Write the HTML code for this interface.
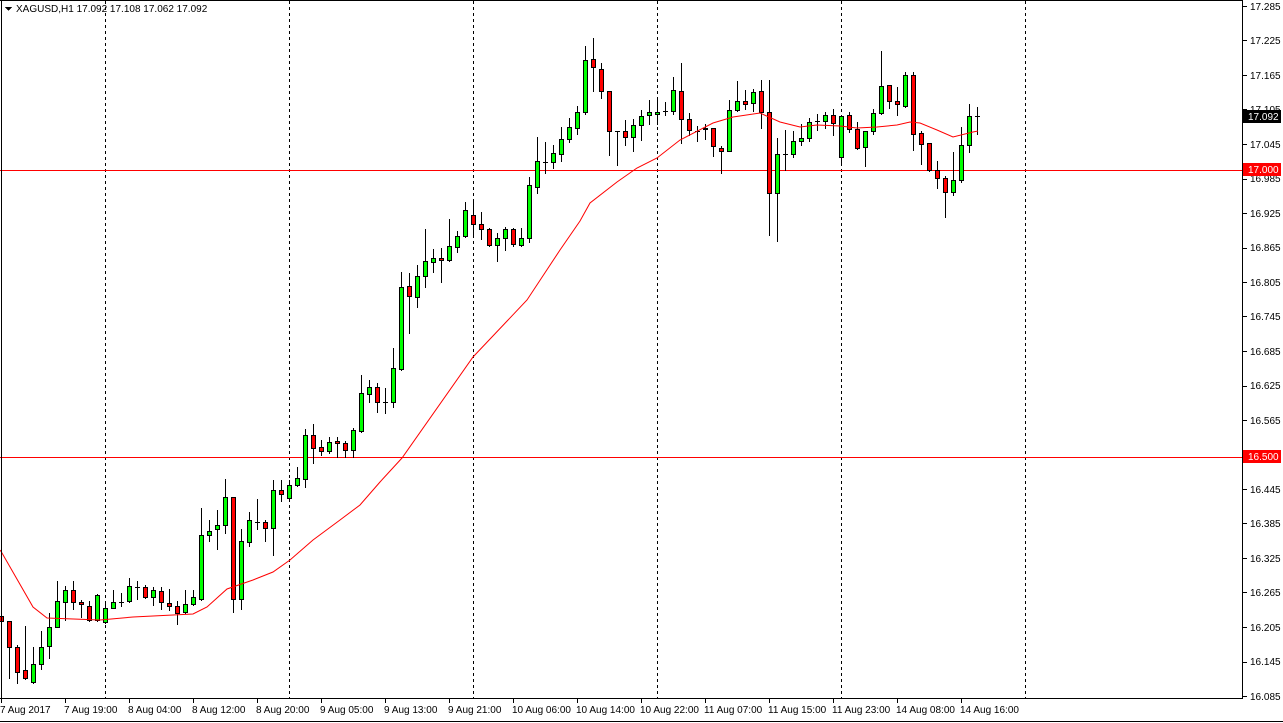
<!DOCTYPE html>
<html><head><meta charset="utf-8"><style>
html,body{margin:0;padding:0;background:#fff;width:1283px;height:723px;overflow:hidden}
svg{display:block}
text{font-family:"Liberation Sans",sans-serif;font-size:10px;fill:#000}
</style></head><body>
<svg id="c" width="1283" height="723" viewBox="0 0 1283 723" shape-rendering="crispEdges">
<rect x="0" y="0" width="1283" height="723" fill="#fff"/>
<g id="grid" stroke="#000" stroke-dasharray="3,3">
<line x1="105.5" y1="1" x2="105.5" y2="698"/>
<line x1="289.5" y1="1" x2="289.5" y2="698"/>
<line x1="473.5" y1="1" x2="473.5" y2="698"/>
<line x1="657.5" y1="1" x2="657.5" y2="698"/>
<line x1="841.5" y1="1" x2="841.5" y2="698"/>
<line x1="1025.5" y1="1" x2="1025.5" y2="698"/>
</g>
<line x1="0" y1="170.5" x2="1242" y2="170.5" stroke="#f00"/>
<line x1="0" y1="457.5" x2="1242" y2="457.5" stroke="#f00"/>
<g id="cd"></g>
<polyline id="ma" fill="none" stroke="#f00" stroke-width="1" shape-rendering="auto" points="0,550 2,553 33,607 47,618 100,620 133,617 193,614 207,607 227,589 253,580 273,572 290,560 313,540 340,520 360,505 380,482 402,458 473,357 527,300 560,250 580,221 590,203 617,182 637,168 657,158 680,140 713,123 733,117 760,113 780,122 800,127 817,125 840,126 857,128 877,127 897,125 910,122 920,123 937,130 953,137 973,132 978,131"/>
<!-- frame -->
<line x1="1.5" y1="0" x2="1.5" y2="699" stroke="#000"/>
<line x1="0" y1="0.5" x2="1243" y2="0.5" stroke="#000"/>
<line x1="1242.5" y1="0" x2="1242.5" y2="699" stroke="#000"/>
<line x1="0" y1="698.5" x2="1243" y2="698.5" stroke="#000"/>
<line x1="0" y1="721.5" x2="1283" y2="721.5" stroke="#000"/>
<g id="ax"></g>
<!-- header -->
<polygon points="5,7 12,7 8.5,11" fill="#000"/>
<text x="16" y="12" style="fill:#000">XAGUSD,H1  17.092 17.108 17.062 17.092</text>
<!-- price labels -->
<g id="pl">
<text x="1250" y="10">17.285</text>
<text x="1250" y="44">17.225</text>
<text x="1250" y="79">17.165</text>
<text x="1250" y="113">17.105</text>
<text x="1250" y="148">17.045</text>
<text x="1250" y="182">16.985</text>
<text x="1250" y="217">16.925</text>
<text x="1250" y="251">16.865</text>
<text x="1250" y="286">16.805</text>
<text x="1250" y="320">16.745</text>
<text x="1250" y="355">16.685</text>
<text x="1250" y="389">16.625</text>
<text x="1250" y="424">16.565</text>
<text x="1250" y="493">16.445</text>
<text x="1250" y="527">16.385</text>
<text x="1250" y="562">16.325</text>
<text x="1250" y="596">16.265</text>
<text x="1250" y="631">16.205</text>
<text x="1250" y="665">16.145</text>
<text x="1250" y="700">16.085</text>
</g>
<rect x="1243" y="110" width="38" height="13" fill="#000"/>
<text x="1248" y="120" style="fill:#fff">17.092</text>
<rect x="1243" y="163" width="38" height="13" fill="#f00"/>
<text x="1248" y="173" style="fill:#fff">17.000</text>
<rect x="1243" y="450" width="38" height="13" fill="#f00"/>
<text x="1248" y="460" style="fill:#fff">16.500</text>
<!-- time labels -->
<g>
<text x="0" y="713">7 Aug 2017</text>
<text x="64" y="713">7 Aug 19:00</text>
<text x="128" y="713">8 Aug 04:00</text>
<text x="192" y="713">8 Aug 12:00</text>
<text x="256" y="713">8 Aug 20:00</text>
<text x="320" y="713">9 Aug 05:00</text>
<text x="384" y="713">9 Aug 13:00</text>
<text x="448" y="713">9 Aug 21:00</text>
<text x="512" y="713">10 Aug 06:00</text>
<text x="576" y="713">10 Aug 14:00</text>
<text x="640" y="713">10 Aug 22:00</text>
<text x="704" y="713">11 Aug 07:00</text>
<text x="768" y="713">11 Aug 15:00</text>
<text x="832" y="713">11 Aug 23:00</text>
<text x="896" y="713">14 Aug 08:00</text>
<text x="960" y="713">14 Aug 16:00</text>
</g>
</svg>
<script>
var D=[[616,621,611,626],[621,647,621,678],[647,672,645,683],[670,678,626,679],[682,664,647,683],[664,647,631,669],[646,627,613,658],[627,601,581,627],[602,590,586,620],[590,602,581,609],[602,604,600,617],[606,620,601,621],[620,595,594,621],[622,608,601,623],[608,602,590,608],[602,602,593,606],[601,586,578,602],[587,587,581,599],[587,597,585,598],[597,590,587,605],[591,602,587,609],[603,606,589,610],[606,613,601,624],[612,604,590,613],[604,597,590,605],[599,535,508,600],[535,531,520,541],[529,525,510,549],[525,497,479,533],[497,599,497,612],[599,541,529,609],[542,520,512,546],[522,522,499,529],[522,528,520,541],[528,490,480,555],[490,494,480,501],[498,485,480,499],[485,478,467,486],[479,435,429,487],[435,448,424,463],[447,451,440,455],[451,442,437,453],[441,443,437,457],[443,450,441,457],[450,430,428,457],[431,393,375,432],[394,387,380,402],[387,402,383,412],[402,402,388,413],[402,368,348,407],[369,287,272,370],[286,296,273,333],[297,276,265,307],[276,261,229,287],[262,258,249,272],[258,260,248,282],[260,246,219,261],[247,236,231,252],[236,210,202,237],[215,224,199,236],[224,229,212,239],[229,245,228,246],[245,238,233,261],[238,229,227,250],[229,244,228,246],[245,238,228,246],[238,185,177,242],[187,161,137,193],[162,162,142,173],[162,153,145,168],[154,139,127,161],[139,127,118,142],[128,112,106,134],[112,60,46,114],[59,67,38,91],[69,91,63,98],[91,131,91,155],[131,131,131,165],[131,137,120,145],[137,125,119,151],[125,116,110,140],[115,112,100,124],[114,112,97,124],[111,111,102,115],[111,90,77,114],[91,119,63,143],[119,130,113,135],[131,131,126,141],[129,128,124,139],[128,146,128,156],[148,151,146,173],[151,110,100,151],[110,101,81,111],[101,104,90,109],[103,92,89,111],[91,112,80,128],[112,193,80,235],[193,154,138,241],[154,154,130,170],[154,141,131,157],[141,138,124,145],[138,122,118,141],[121,121,114,130],[121,115,112,128],[115,123,109,135],[157,116,116,163],[115,129,112,132],[129,148,122,149],[147,131,131,166],[131,113,109,134],[113,86,51,114],[85,101,85,108],[101,104,87,115],[106,75,72,107],[75,134,72,150],[133,144,131,164],[143,170,143,171],[170,178,161,188],[178,192,176,217],[192,180,152,195],[180,145,127,182],[145,116,104,152],[116,116,107,134]];
var s='',NS='';
for(var k=0;k<D.length;k++){
 var d=D[k],x=1+8*k,o=d[0],c=d[1],h=d[2],l=d[3];
 s+='<line x1="'+(x+.5)+'" y1="'+h+'" x2="'+(x+.5)+'" y2="'+(l+1)+'" stroke="#000"/>';
 if(o==c){s+='<line x1="'+(x-2)+'" y1="'+(o+.5)+'" x2="'+(x+3)+'" y2="'+(o+.5)+'" stroke="#000"/>';}
 else{var t=Math.min(o,c),b=Math.max(o,c);
 s+='<rect x="'+(x-1.5)+'" y="'+(t+.5)+'" width="4" height="'+(b-t)+'" fill="'+(c<o?'#00ff00':'#ff0000')+'" stroke="#000"/>';}
}
document.getElementById('cd').innerHTML=s;
var a='';
var pr=[17.285,17.225,17.165,17.105,17.045,16.985,16.925,16.865,16.805,16.745,16.685,16.625,16.565,16.505,16.445,16.385,16.325,16.265,16.205,16.145,16.085];
for(var i=0;i<pr.length;i++){var y=Math.round(6+(17.285-pr[i])*575)+.5;a+='<line x1="1243" y1="'+y+'" x2="1247" y2="'+y+'" stroke="#000"/>';}
for(var j=0;j<16;j++){var xx=1+64*j+.5;a+='<line x1="'+xx+'" y1="699" x2="'+xx+'" y2="703" stroke="#000"/>';}
document.getElementById('ax').innerHTML=a;
</script>
</body></html>
